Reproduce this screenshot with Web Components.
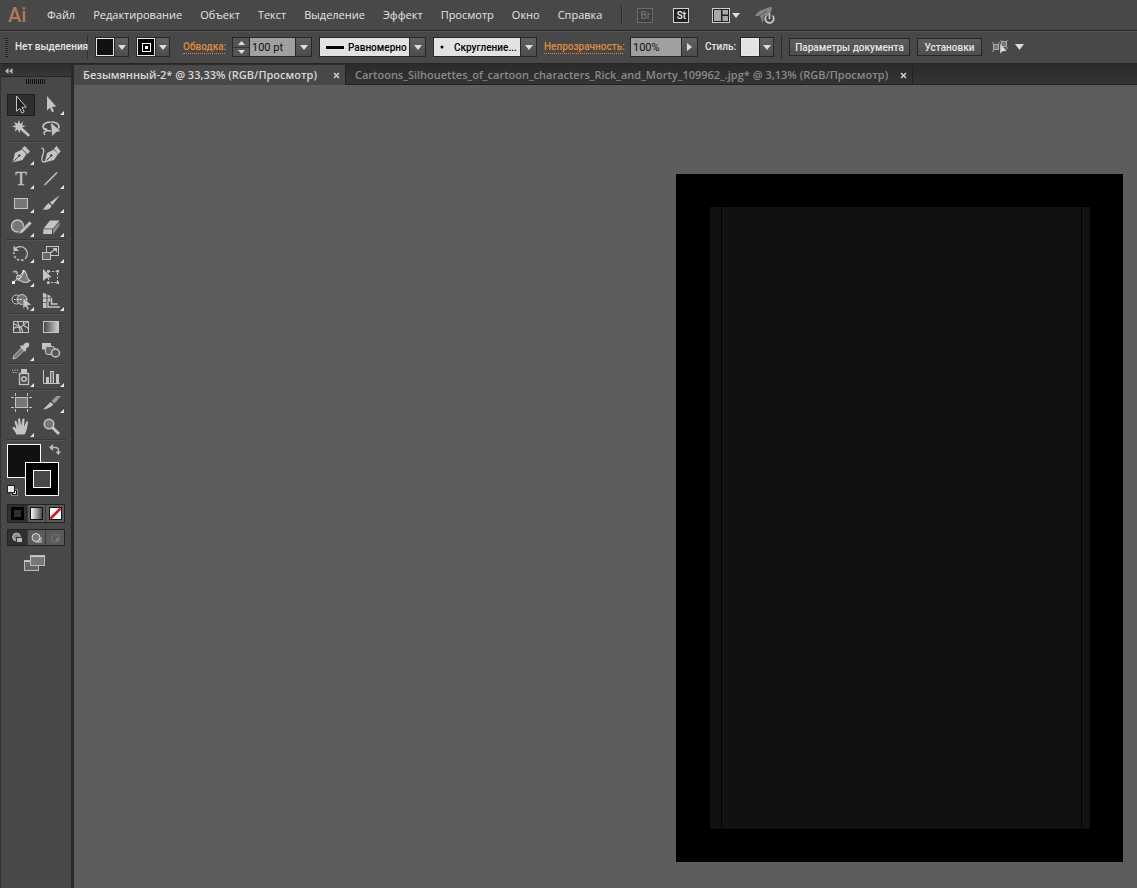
<!DOCTYPE html>
<html lang="ru">
<head>
<meta charset="utf-8">
<title>Ai</title>
<style>
html, body { margin: 0; height: 100%; }
body { font-family: "Open Sans", "Noto Sans", sans-serif; background: #5d5d5d; }
</style>
</head>
<body>
<ai-app></ai-app>
<script>
const reset = `<style>
*, *::before, *::after { box-sizing: border-box; }
button, select, input { font: inherit; color: inherit; margin: 0; padding: 0; border: 0; border-radius: 0; background: none; outline: 0; }
svg { display: block; }
</style>`;

function define(name, html, setup) {
  const tpl = document.createElement('template');
  tpl.innerHTML = reset + (typeof html === 'string' ? html : '');
  customElements.define(name, class extends HTMLElement {
    constructor() {
      super();
      this.attachShadow({ mode: 'open' }).append(tpl.content.cloneNode(true));
    }
    connectedCallback() { if (setup) setup(this, this.shadowRoot); }
  });
}

const L = '#c4c4c4';
const icons = {
  select: `<path d="M10.500 3v15.200l3.200-2.700 2.200 4.500 2.300-1.200-2.200-4.300 4.200-.5z" fill="#222" stroke="${L}"/>`,
  direct: `<path d="M11 3v14.500l3-2.700 2 4.500 2-1-2-4.300 4.200-.6z" fill="${L}"/>`,
  wand: `<path d="M13 3l1.200 4 3.300-2.500-1.500 3.800 3.700.6-3.500 1.700L24 18l-1.600 1.700-8.200-7-.8 3.500-1.600-3.600-3.300 1.900 1.300-3.700L6 9.300l3.800-1-2-3.600 3.700 2z" fill="${L}"/>`,
  lasso: `<ellipse cx="15" cy="9.500" rx="8" ry="4.500" fill="none" stroke="${L}" stroke-width="1.700"/><path d="M8 12c3-1 4 2 1.500 2.500S8 17 9 18" fill="none" stroke="${L}" stroke-width="1.300"/><path d="M14.500 5l10.500 9.500-4.500.5L16 19.500z" fill="${L}" stroke="#484848" stroke-width=".6"/>`,
  pen: `<path d="M6.500 19.500l2.500-9.500 7-3.500 4.500 4.500-4 6z" fill="${L}"/><path d="M7 19l6-6" stroke="#444"/><circle cx="13.300" cy="12.500" r="1.200" fill="#444"/><path d="M16 5.500l2.700-2.500 5.300 5.500-2.500 2.600z" fill="${L}"/>`,
  curve: `<path d="M8.500 19.500l2.500-9.500 7-3.500 4 4.500-4 6z" fill="${L}"/><path d="M9 19l6-6" stroke="#444"/><circle cx="15.300" cy="12.500" r="1.200" fill="#444"/><path d="M18 5.500l2.700-2.500 4 5.500-2.500 2.600z" fill="${L}"/><path d="M5.500 5c6 1-2 10 1 13.500 1 1 3 0 4-1" fill="none" stroke="${L}" stroke-width="1.300"/>`,
  type: `<text x="15" y="18" text-anchor="middle" font-family="Liberation Serif, serif" font-size="19" fill="${L}" stroke="${L}" stroke-width=".3">T</text>`,
  line: `<path d="M8.500 18L21 5.500" stroke="${L}" stroke-width="1.500"/>`,
  rect: `<rect x="8.500" y="7.500" width="13" height="10" fill="#777" stroke="${L}"/>`,
  brush: `<path d="M24 4l-7.500 10-2.500-2.500z" fill="${L}"/><path d="M15.500 14.800c-1 4-5 4.500-9.500 3.500 3 0 3-4.500 7-6z" fill="${L}"/>`,
  shaper: `<circle cx="11.500" cy="11" r="6" fill="#777" stroke="${L}" stroke-width="1.400"/><path d="M12.500 19.500l1.500-4L23.500 6l2.500 2.500-9.500 9.500z" fill="${L}" stroke="#484848" stroke-width=".8"/>`,
  eraser: `<path d="M7.500 13.500L14 5.500h9.500L17 13.500z" fill="${L}"/><path d="M7.500 14.300H16V19H7z" fill="${L}"/><path d="M17 14.300l6.500-7.300v4L17 19z" fill="#8c8c8c"/>`,
  rotate: `<path d="M9.500 7.500A7 7 0 1 1 19 18" fill="none" stroke="${L}" stroke-width="1.200"/><path d="M17.500 18.800A7 7 0 0 1 8 11" fill="none" stroke="${L}" stroke-width="1.500" stroke-dasharray="2.500 1.700"/><path d="M7.500 4.500v5.500H13z" fill="${L}"/>`,
  scale: `<rect x="10.500" y="5.500" width="12" height="9" fill="none" stroke="${L}"/><rect x="6.500" y="11.500" width="8" height="7" fill="#666" stroke="${L}"/><path d="M14.500 12l5-4.500" stroke="${L}" stroke-width="1.200"/><path d="M16.500 7H21v4.500z" fill="${L}"/>`,
  width: `<path d="M7 7c3-2 4-1 4.500 2.500M24 15.500c-4-1-3-10-6-9.500-1.500 4-3 7-6 9 3 0 4 2.500 7 2.500 2 0 4-1 5-2z" fill="#7a7a7a" stroke="${L}" stroke-width="1.200"/><path d="M7.500 17.500L18 6" stroke="#eee"/><circle cx="12.500" cy="12" r="1.800" fill="#666" stroke="#eee"/><path d="M6 16h3v3H6zM16.500 5h2v2h-2z" fill="#eee"/>`,
  free: `<path d="M7 4v12l3-2.500 1.500-.5 4-1z" fill="${L}"/><rect x="12.500" y="6.500" width="9" height="11" fill="none" stroke="${L}" stroke-dasharray="2 1.500"/><path d="M11 5h2.500v2.500H11zM20.500 5H23v2.500h-2.500zM20.500 16.500H23V19h-2.500zM11 16.500h2.500V19H11z" fill="${L}"/>`,
  builder: `<circle cx="10.500" cy="10.500" r="4.500" fill="none" stroke="${L}"/><circle cx="16" cy="10.500" r="5" fill="#777" stroke="${L}"/><path d="M8 10.500h13" stroke="#fff" stroke-dasharray="1.500 1.500"/><path d="M17 8.500v11l2.500-2 2 3.500 1.700-1-1.700-3.500 4-.5z" fill="${L}" stroke="#484848" stroke-width=".5"/>`,
  perspective: `<path d="M7 4l3.500 1V19H7zM11.500 5.500L14.500 7v5.500h-3z" fill="${L}"/><path d="M12 12.500v5.500h12M15.500 9v6h6" fill="none" stroke="${L}" stroke-width="1.500"/><path d="M7 9h8M7 13.500h4" stroke="#484848" stroke-width=".7"/>`,
  mesh: `<rect x="7.500" y="6.500" width="15" height="11" fill="none" stroke="${L}"/><path d="M7 15c4-7 4 0 8-3s4-5 8-5M7 8c4 4 8 0 10 10M12 6c-1 4 3 5 2 12M18 6c-2 5 1 5 5 8" fill="none" stroke="${L}" stroke-width="1.200"/>`,
  gradient: `<defs><linearGradient id="g"><stop stop-color="#444"/><stop offset="1" stop-color="#d0d0d0"/></linearGradient></defs><rect x="7.500" y="6.500" width="15" height="11" fill="url(#g)" stroke="${L}"/>`,
  dropper: `<path d="M7 20l1-3.500L15.500 9l2.500 2.500-7.500 7.300z" fill="#777" stroke="${L}"/><path d="M14 7.500l1.500-1.500 1.500 1c1-3 3.500-4.500 5.500-3 2 2 0 5-3 5.500l1 1.500-1.500 1.700z" fill="${L}"/>`,
  blend: `<path d="M6 4h9v3h-4.500v3.500H6z" fill="${L}"/><rect x="9.500" y="7.500" width="9" height="8" rx="2" fill="#666" stroke="${L}"/><circle cx="19.500" cy="14" r="4" fill="#555" stroke="${L}" stroke-width="1.500"/>`,
  spray: `<rect x="13.500" y="8.500" width="9" height="11" fill="none" stroke="${L}" stroke-width="1.300"/><path d="M15 4h6v4h-6z" fill="${L}"/><circle cx="18" cy="14" r="2.300" fill="none" stroke="${L}" stroke-width="1.500"/><path d="M6 5h7M7 7.500h5" stroke="${L}" stroke-width="1.200" stroke-dasharray="1.200 1.200"/>`,
  graph: `<path d="M7.500 5v13.500H24" fill="none" stroke="${L}"/><rect x="10" y="12" width="3" height="6" fill="${L}"/><rect x="14.500" y="6.500" width="3" height="12" fill="#777" stroke="${L}"/><rect x="20" y="9" width="3" height="9" fill="${L}"/>`,
  artboard: `<rect x="9.500" y="6.500" width="12" height="10" fill="#777" stroke="${L}"/><path d="M9.500 2v3M21.500 2v3M9.500 18v3M21.500 18v3M5 6.500h3M5 16.500h3M23 6.500h3M23 16.500h3" stroke="${L}"/>`,
  slice: `<path d="M7 18.500l7.500-7.500 3 2.500c-3 3-6.500 4.500-10.500 5z" fill="${L}"/><path d="M15.500 10l5-5H25l-6.500 7.500z" fill="#999"/>`,
  hand: `<path d="M10.500 19.500c-1-3-4-5-4-7.500 1.500-1 3 1 4 2L8.500 6.500c1-1.300 2-.5 2.300.5l1.800 4.500-.6-7.500c1-1.300 2-.5 2.200.5l.8 6.500L16.500 4c1-1 2-.3 2 .7l-.5 7 2.500-5.200c1-.7 1.800 0 1.600 1-.7 4-1.600 9.500-3.600 12z" fill="${L}"/>`,
  zoom: `<circle cx="13" cy="9" r="4.800" fill="#777" stroke="${L}" stroke-width="1.500"/><path d="M16.500 12.500l6.500 6.500" stroke="${L}" stroke-width="3"/>`
};

define('tool-button', `<style>
:host { display: block; width: 30px; height: 24px; padding: 1px; }
button { display: block; width: 28px; height: 22px; border: 1px solid transparent; }
:host([active]) button { background: #2f2f2f; border-color: #1f1f1f; }
svg { width: 30px; height: 24px; margin: -2px; }
</style><button type="button"></button>`, (el, root) => {
  const b = root.querySelector('button');
  b.setAttribute('aria-label', el.getAttribute('label'));
  b.innerHTML = `<svg viewBox="0 0 30 24">${icons[el.getAttribute('icon')]}${el.hasAttribute('more') ? '<path d="M28 18v4h-4z" fill="#e6e6e6"/>' : ''}</svg>`;
});

define('tool-group', `<style>
:host { display: grid; grid-template-columns: 30px 30px; border-bottom: 1px solid #383838; padding-bottom: 0; margin-bottom: 1px; box-shadow: 0 1px #545454; }
</style><slot></slot>`);

define('color-wells', `<style>
:host { display: block; padding: 3px 1px 0; }
.wells { position: relative; height: 53px; margin-right: 4px; }
.wells button, .wells svg { position: absolute; }
.fill { left: 0; top: 0; width: 34px; height: 34px; background: #111; border: 1px solid #fff; }
.stroke { left: 18px; top: 18px; width: 34px; height: 34px; background: #000; border: 1px solid #fff; padding: 7px; }
.stroke i { display: block; width: 18px; height: 18px; background: #484848; border: 1px solid #fff; }
.swap { right: 0; top: 0; }
.swap svg { right: 0; top: 0; }
.reset { left: 0; bottom: 0; }
.row { display: grid; grid-template-columns: repeat(3, 1fr); border: 1px solid #222; margin-top: 7px; background: #484848; }
.row button { height: 17px; display: grid; place-items: center; }
.row button + button { border-left: 1px solid #3a3a3a; background: #5a5a5a; }
.row.draw { margin-top: 6px; }
.row.draw button { height: 15px; }
.row button:first-child { background: #303030; }
.screen { display: block; margin: 9px 0 0 17px; }
</style>
<div class="wells">
  <button class="fill" aria-label="Заливка"></button>
  <button class="stroke" aria-label="Обводка"><i></i></button>
  <button class="swap" aria-label="Поменять местами"><svg width="12" height="12" viewBox="0 0 12 12"><path d="M2 3.500h4.500q3 0 3 3v2" fill="none" stroke="#bbb" stroke-width="1.300"/><path d="M0 3.500L4 0v7zM6.500 7.500h5.500L9.300 11z" fill="#bbb"/></svg></button>
  <svg class="reset" width="12" height="12" viewBox="0 0 12 12"><rect x="4.500" y="4.500" width="6" height="6" fill="#111" stroke="#888"/><rect x="6.500" y="6.500" width="2" height="2" fill="#484848" stroke="#ddd"/><rect x=".5" y=".5" width="7" height="7" fill="#e8e8e8" stroke="#222"/></svg>
</div>
<div class="row">
  <button aria-label="Цвет"><svg width="13" height="13"><rect x="1.500" y="1.500" width="10" height="10" fill="#303030" stroke="#000" stroke-width="3"/></svg></button>
  <button aria-label="Градиент"><svg width="13" height="13"><defs><linearGradient id="w"><stop stop-color="#fff"/><stop offset="1" stop-color="#4a4038"/></linearGradient></defs><rect x=".5" y=".5" width="12" height="12" fill="url(#w)" stroke="#111"/></svg></button>
  <button aria-label="Нет"><svg width="13" height="13"><rect x=".5" y=".5" width="12" height="12" fill="#fff" stroke="#111"/><path d="M1.500 11.500l10-10" stroke="#d8141c" stroke-width="2.600"/></svg></button>
</div>
<div class="row draw">
  <button aria-label="Обычный режим"><svg width="13" height="12"><circle cx="5.500" cy="5" r="3.800" fill="#888" stroke="#ccc"/><rect x="5.500" y="5.500" width="6" height="5" fill="#bbb" stroke="#333"/></svg></button>
  <button aria-label="Рисование позади"><svg width="13" height="12"><rect x="6" y="5" width="6" height="6" fill="#999"/><circle cx="6" cy="5.500" r="4" fill="#777" stroke="#ddd"/></svg></button>
  <button aria-label="Рисование внутри" disabled><svg width="13" height="12"><circle cx="6.500" cy="6" r="4" fill="none" stroke="#777"/><path d="M7 6h3v3H7z" fill="#777"/></svg></button>
</div>
<button class="screen" aria-label="Режим экрана"><svg width="22" height="17"><rect x=".5" y="5.500" width="14" height="10" fill="#666" stroke="#bbb"/><rect x="6.500" y=".5" width="14" height="10" fill="#777" stroke="#bbb"/><path d="M7 1.500h13M1 6.500h5" stroke="#ccc"/></svg></button>`);

define('tools-panel', `<style>
:host { display: block; width: 74px; background: #484848; border-left: 1px solid #333; border-right: 3px solid #2a2a2a; flex: none; }
.head { height: 13px; background: linear-gradient(#2d2d2d, #383838); border-bottom: 1px solid #252525; padding: 4px; }
.grip { height: 5px; width: 20px; margin: 2px 0 9px 25px; background: repeating-linear-gradient(90deg, #111 0 1px, #484848 1px 2px); }
.tools { width: 60px; margin-left: 5px; }
</style>
<div class="head"><svg width="8" height="6"><path d="M3.500 0v6L0 3zM7.500 0v6L4 3z" fill="#bbb"/></svg></div>
<div class="grip"></div>
<div class="tools">
<tool-group><tool-button icon="select" label="Выделение" active></tool-button><tool-button icon="direct" label="Прямое выделение" more></tool-button><tool-button icon="wand" label="Волшебная палочка"></tool-button><tool-button icon="lasso" label="Лассо"></tool-button></tool-group>
<tool-group><tool-button icon="pen" label="Перо" more></tool-button><tool-button icon="curve" label="Кривизна"></tool-button><tool-button icon="type" label="Текст" more></tool-button><tool-button icon="line" label="Отрезок линии" more></tool-button><tool-button icon="rect" label="Прямоугольник" more></tool-button><tool-button icon="brush" label="Кисть" more></tool-button><tool-button icon="shaper" label="Shaper" more></tool-button><tool-button icon="eraser" label="Ластик" more></tool-button></tool-group>
<tool-group><tool-button icon="rotate" label="Поворот" more></tool-button><tool-button icon="scale" label="Масштаб" more></tool-button><tool-button icon="width" label="Ширина" more></tool-button><tool-button icon="free" label="Свободное трансформирование"></tool-button><tool-button icon="builder" label="Создание фигур" more></tool-button><tool-button icon="perspective" label="Сетка перспективы" more></tool-button></tool-group>
<tool-group><tool-button icon="mesh" label="Сетка"></tool-button><tool-button icon="gradient" label="Градиент"></tool-button><tool-button icon="dropper" label="Пипетка" more></tool-button><tool-button icon="blend" label="Переход"></tool-button></tool-group>
<tool-group><tool-button icon="spray" label="Распыление символов" more></tool-button><tool-button icon="graph" label="Диаграмма" more></tool-button></tool-group>
<tool-group><tool-button icon="artboard" label="Монтажная область"></tool-button><tool-button icon="slice" label="Фрагменты" more></tool-button><tool-button icon="hand" label="Рука" more></tool-button><tool-button icon="zoom" label="Масштаб просмотра"></tool-button></tool-group>
<color-wells></color-wells>
</div>`);

define('menu-bar', `<style>
:host { display: flex; align-items: center; height: 30px; padding-left: 8px; background: #484848; font: 11px "Open Sans", "Noto Sans", sans-serif; color: #e4e4e4; }
.logo { width: 30px; font: 500 20px/28px Roboto, sans-serif; color: #b5795a; }
nav { display: flex; }
nav button { padding: 0 9px; line-height: 20px; white-space: nowrap; }
.sep { width: 1px; height: 20px; background: #2c2c2c; margin: 0 15px 0 10px; box-shadow: 1px 0 #555; }
.app { width: 16px; height: 15px; border: 1px solid #d0d0d0; background: #222; color: #eee; font: 500 10px/13px Roboto, sans-serif; margin-right: 20px; text-align: center; }
.app[disabled] { border-color: #6a6a6a; background: #404040; color: #707070; }
.layout { display: flex; align-items: center; gap: 2px; margin: 0 14px 0 3px; }
</style>
<div class="logo">Ai</div>
<nav><button>Файл</button><button>Редактирование</button><button>Объект</button><button>Текст</button><button>Выделение</button><button>Эффект</button><button>Просмотр</button><button>Окно</button><button>Справка</button></nav>
<div class="sep"></div>
<button class="app" disabled>Br</button><button class="app">St</button>
<button class="layout" aria-label="Рабочая среда"><svg width="18" height="15"><rect x=".5" y=".5" width="17" height="14" fill="#222" stroke="#ccc"/><path d="M2 2h7v11H2zM10.500 2H16v4.500h-5.500zM10.500 8H16v5h-5.500z" fill="#a8a8a8"/></svg><svg width="8" height="5"><path d="M0 0h8L4 5z" fill="#ddd"/></svg></button>
<button aria-label="Производительность"><svg width="22" height="18"><path d="M1 10C4 5 7 4 9 4c3-2 6-3 9-3 0 3-1 6-3 7l-5 6-2 3-.5-3.500L6 10z" fill="#858585"/><path d="M5 10l8-5" stroke="#5a5a5a"/><path d="M12.500 10a4.300 4.300 0 1 0 6 0" fill="none" stroke="#484848" stroke-width="4"/><path d="M12.500 9.500a4.300 4.300 0 1 0 6 0M15.500 7v6" fill="none" stroke="#c8c8c8" stroke-width="1.700"/></svg></button>`);

define('swatch-picker', `<style>
:host { display: flex; width: 34px; height: 20px; border: 1px solid #262626; flex: none; }
.well { width: 18px; border: 1px solid #e8e8e8; background: var(--swatch, #111); display: grid; place-items: center; }
.more { flex: 1; border-left: 1px solid #262626; background: linear-gradient(#606060, #4c4c4c); display: grid; place-items: center; }
</style><button class="well" aria-label="Образец"><slot></slot></button><button class="more" aria-label="Открыть"><svg width="8" height="5"><path d="M0 0h8L4 5z" fill="#ddd"/></svg></button>`);

define('control-bar', `<style>
:host { display: flex; align-items: center; gap: 7px; height: 34px; padding-left: 5px; background: #484848; border-top: 1px solid #252525; border-bottom: 1px solid #252525; box-shadow: inset 0 1px #555; font: 500 10px Roboto, "Open Sans", sans-serif; color: #e6e6e6; white-space: nowrap; }
.grip { width: 3px; height: 19px; background: repeating-linear-gradient(#1c1c1c 0 1px, #5a5a5a 1px 2px); flex: none; }
.status { width: 73px; height: 24px; line-height: 24px; border-right: 1px solid #333; flex: none; }
a { color: #e08c38; text-decoration: none; border-bottom: 1px dotted #d98736; line-height: 13px; flex: none; }
.stroke-link { width: 42px; margin-left: 6px; }
.opacity-link { width: 79px; }
.style-label { width: 28px; line-height: 14px; }
.field { display: flex; height: 20px; border: 1px solid #262626; color: #111; background: #a0a0a0; flex: none; }
.field.light { background: #e2e2e2; }
.field input { min-width: 0; flex: 1; padding: 0 2px; font-size: 11px; font-weight: 400; }
.more { width: 16px; border-left: 1px solid #262626; background: linear-gradient(#606060, #4c4c4c); display: grid; place-items: center; flex: none; }
.spin { width: 17px; display: grid; grid-template-rows: 9px 9px; border-right: 1px solid #262626; background: #555; }
.spin button { display: grid; place-items: center; }
.spin button + button { border-top: 1px solid #333; }
.weight { width: 80px; } .profile { width: 107px; } .brush { width: 104px; } .opacity { width: 68px; }
.field svg.preview { align-self: center; margin-left: 6px; flex: none; }
select { appearance: none; flex: 1; min-width: 0; padding-left: 4px; color: #000; }
.brush select { padding-left: 8px; }
.sep { width: 1px; height: 24px; background: #2c2c2c; flex: none; }
.cmd { height: 18px; border: 1px solid #262626; background: linear-gradient(#5c5c5c, #4e4e4e); flex: none; }
.doc { width: 121px; } .prefs { width: 65px; }
.align { display: flex; align-items: center; gap: 6px; margin-left: 3px; }
</style>
<div class="grip"></div>
<div class="status">Нет выделения</div>
<swatch-picker></swatch-picker>
<swatch-picker style="--swatch:#000"><svg width="9" height="9"><rect x=".5" y=".5" width="8" height="8" fill="#000" stroke="#fff"/><rect x="3" y="3" width="3" height="3" fill="#fff"/></svg></swatch-picker>
<a class="stroke-link" href="#">Обводка:</a>
<div class="field weight"><div class="spin"><button aria-label="Больше"><svg width="7" height="4"><path d="M0 4h7L3.500 0z" fill="#ddd"/></svg></button><button aria-label="Меньше"><svg width="7" height="4"><path d="M0 0h7L3.500 4z" fill="#ddd"/></svg></button></div><input aria-label="Толщина обводки" value="100 pt"><button class="more" aria-label="Список"><svg width="8" height="5"><path d="M0 0h8L4 5z" fill="#ddd"/></svg></button></div>
<div class="field light profile"><svg class="preview" width="18" height="3"><path d="M0 1.500h18" stroke="#000" stroke-width="3"/></svg><select aria-label="Профиль"><option>Равномерно</option></select><button class="more" aria-label="Список"><svg width="8" height="5"><path d="M0 0h8L4 5z" fill="#ddd"/></svg></button></div>
<div class="field light brush"><svg class="preview" width="6" height="4"><circle cx="2" cy="2" r="1.500"/></svg><select aria-label="Кисть"><option>Скругление...</option></select><button class="more" aria-label="Список"><svg width="8" height="5"><path d="M0 0h8L4 5z" fill="#ddd"/></svg></button></div>
<a class="opacity-link" href="#">Непрозрачность:</a>
<div class="field opacity"><input aria-label="Непрозрачность" value="100%"><button class="more" aria-label="Список"><svg width="5" height="8"><path d="M0 0v8l5-4z" fill="#ddd"/></svg></button></div>
<span class="style-label">Стиль:</span>
<swatch-picker style="--swatch:#e2e2e2"></swatch-picker>
<div class="sep"></div>
<button class="cmd doc">Параметры документа</button>
<button class="cmd prefs">Установки</button>
<button class="align" aria-label="Выделить похожие"><svg width="17" height="15"><rect x="1.500" y="4.500" width="5" height="5" fill="#777" stroke="#aaa"/><rect x="9.500" y="1.500" width="5" height="5" fill="#777" stroke="#aaa"/><path d="M0 3h2M0 11h2M6 3h2M8 0h2M14 0h2M14 8h2" stroke="#aaa"/><path d="M8 3v11l2.500-2.500L15 11z" fill="#ddd" stroke="#444" stroke-width=".5"/></svg><svg width="9" height="6"><path d="M0 0h9L4.500 6z" fill="#ddd"/></svg></button>`);

define('document-tab', `<style>
:host { display: flex; align-items: center; height: 20px; padding: 0 3px 0 9px; border-right: 1px solid #222; font-size: 11px; font-weight: 600; color: #8a8a8a; flex: none; white-space: nowrap; }
:host([active]) { background: #484848; color: #d8d8d8; }
.title { width: var(--title); text-align: left; line-height: 20px; }
.close { margin-left: 12px; width: 11px; height: 18px; display: grid; place-items: center; }
</style><button class="title" role="tab"><slot></slot></button><button class="close" aria-label="Закрыть"><svg width="7" height="7"><path d="M1 1l5 5M6 1L1 6" stroke="#d0d0d0" stroke-width="1.500"/></svg></button>`);

define('art-canvas', `<style>
:host { display: block; position: relative; flex: 1; background: #5d5d5d; overflow: hidden; }
.shape { position: absolute; right: 14px; top: 89px; width: 447px; height: 688px; background: #111; border: solid #000; border-width: 33px 33px 33px 34px; }
.board { height: 100%; margin: 0 8px 0 11px; border: solid #030303; border-width: 0 1px; }
</style><div class="shape"><div class="board"></div></div>`);

define('ai-app', `<style>
:host { display: flex; flex-direction: column; min-height: 100vh; }
.work { display: flex; flex: 1; }
.docs { display: flex; flex-direction: column; flex: 1; min-width: 0; }
.tabs { display: flex; height: 21px; padding-top: 1px; background: linear-gradient(#2b2b2b, #343434); border-bottom: 1px solid #222; }
</style>
<menu-bar></menu-bar>
<control-bar></control-bar>
<div class="work"><tools-panel></tools-panel>
<div class="docs"><div class="tabs" role="tablist"><document-tab active style="--title:236px">Безымянный-2* @ 33,33% (RGB/Просмотр)</document-tab><document-tab style="--title:531px">Cartoons_Silhouettes_of_cartoon_characters_Rick_and_Morty_109962_.jpg* @ 3,13% (RGB/Просмотр)</document-tab></div>
<art-canvas></art-canvas></div></div>`);
</script>
</body>
</html>
